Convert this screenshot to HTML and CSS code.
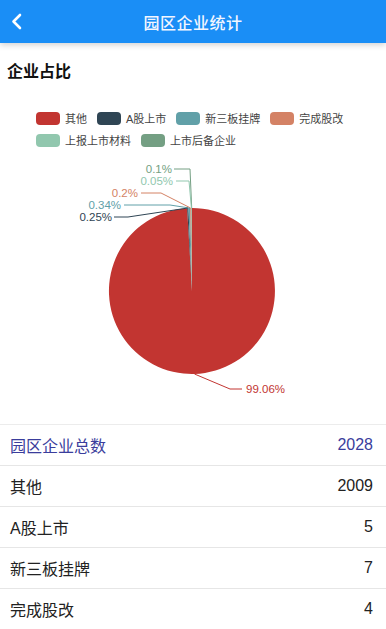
FILE: index.html
```html
<!DOCTYPE html>
<html lang="zh">
<head>
    <meta charset="UTF-8">
    <meta name="viewport" content="width=device-width, initial-scale=1.0">
    <title>园区企业统计</title>
    <link rel="stylesheet" href="styles.css">
</head>
<body>
    <div class="header">
        <svg class="back" width="30" height="43" viewBox="0 0 30 43">
            <polyline points="20,15 13.5,21.5 20,28" fill="none" stroke="#fff" stroke-width="2.6" stroke-linecap="round" stroke-linejoin="round"/>
        </svg>
        <h1>园区企业统计</h1>
    </div>

    <div class="title">企业占比</div>

    <div class="legend">
        <div class="item"><span class="swatch" style="background:#c23531"></span>其他</div>
        <div class="item"><span class="swatch" style="background:#2f4554"></span>A股上市</div>
        <div class="item"><span class="swatch" style="background:#61a0a8"></span>新三板挂牌</div>
        <div class="item"><span class="swatch" style="background:#d48265"></span>完成股改</div>
        <div class="item"><span class="swatch" style="background:#91c7ae"></span>上报上市材料</div>
        <div class="item"><span class="swatch" style="background:#749f83"></span>上市后备企业</div>
    </div>

    <svg class="pie" width="386" height="269" viewBox="0 0 386 269">
        <!-- slices, clockwise from top -->
        <path d="M192,136 L192,53 A83,83 0 1 1 187.12,53.14 Z" fill="#c23531"/>
        <path d="M192,136 L187.12,53.14 A83,83 0 0 1 188.40,53.08 Z" fill="#2f4554"/>
        <path d="M192,136 L188.40,53.08 A83,83 0 0 1 190.20,53.02 Z" fill="#61a0a8"/>
        <path d="M192,136 L190.20,53.02 A83,83 0 0 1 191.23,53.00 Z" fill="#d48265"/>
        <path d="M192,136 L191.23,53.00 A83,83 0 0 1 191.49,53.00 Z" fill="#91c7ae"/>
        <path d="M192,136 L191.49,53.00 A83,83 0 0 1 192,53 Z" fill="#749f83"/>

        <!-- label lines -->
        <g fill="none" stroke-width="1">
            <polyline points="174,14 190,14 191.7,53" stroke="#749f83"/>
            <polyline points="176,26 189,26 191.4,53" stroke="#91c7ae"/>
            <polyline points="141,38 161,38 190.6,53" stroke="#d48265"/>
            <polyline points="124,50 170,50 189.3,53" stroke="#61a0a8"/>
            <polyline points="114,62 128,62 187.8,53" stroke="#2f4554"/>
            <polyline points="194.5,219 230,234 242,234" stroke="#c23531"/>
        </g>

        <g class="labels" text-anchor="end">
            <text x="172" y="18" fill="#749f83">0.1%</text>
            <text x="173" y="30" fill="#91c7ae">0.05%</text>
            <text x="138" y="42" fill="#d48265">0.2%</text>
            <text x="121" y="54" fill="#61a0a8">0.34%</text>
            <text x="112" y="66" fill="#2f4554">0.25%</text>
            <text x="246" y="238" fill="#c23531" text-anchor="start">99.06%</text>
        </g>
    </svg>

    <div class="table">
        <div class="row total"><span>园区企业总数</span><span>2028</span></div>
        <div class="row"><span>其他</span><span>2009</span></div>
        <div class="row"><span>A股上市</span><span>5</span></div>
        <div class="row"><span>新三板挂牌</span><span>7</span></div>
        <div class="row"><span>完成股改</span><span>4</span></div>
    </div>
</body>
</html>
```
FILE: styles.css
```css
*{
    margin: 0;
    padding: 0;
    box-sizing: border-box;
}
body{
    width: 386px;
    background-color: #fff;
    font-family: "Liberation Sans", "Noto Sans CJK SC", sans-serif;
    color: #222;
    overflow: hidden;
}
.header{
    position: relative;
    height: 43px;
    background-color: #1a8ef6;
    box-shadow: 0 2px 6px rgba(0,0,0,0.18);
    display: flex;
    align-items: center;
    justify-content: center;
}
.header h1{
    font-size: 16px;
    font-weight: 500;
    color: #f2f6ff;
    letter-spacing: 0.5px;
}
.back{
    position: absolute;
    left: 0;
    top: 0;
}
.title{
    padding: 20px 7px 0;
    font-size: 16px;
    line-height: 18px;
    font-weight: bold;
    color: #111;
}
.legend{
    width: 316px;
    margin: 30px auto 0;
    padding-left: 1px;
    display: flex;
    flex-wrap: wrap;
    row-gap: 8px;
    column-gap: 10px;
}
.item{
    display: flex;
    align-items: center;
    height: 14px;
    font-size: 11px;
    color: #444;
}
.swatch{
    display: inline-block;
    width: 24px;
    height: 13px;
    border-radius: 4px;
    margin-right: 5px;
}
.pie{
    display: block;
    margin-top: 8px;
}
.labels text{
    font-family: "Liberation Sans", sans-serif;
    font-size: 11.5px;
}
.table{
    border-top: 1px solid #ececec;
}
.row{
    display: flex;
    justify-content: space-between;
    align-items: center;
    height: 41px;
    padding: 0 13px 0 10px;
    border-bottom: 1px solid #e6e6e6;
    font-size: 16px;
    color: #222;
}
.row.total{
    color: #3a3d9c;
}
```
